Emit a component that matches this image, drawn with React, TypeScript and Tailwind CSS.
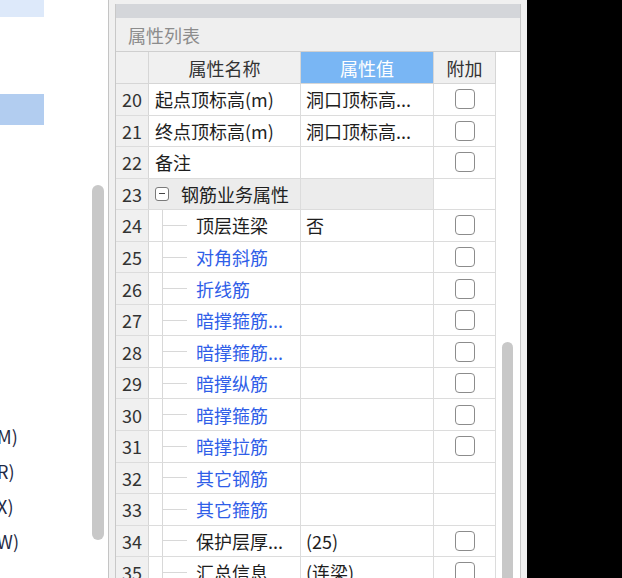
type Row = {
  n: number;
  name: string;
  value?: string;
  kind: "plain" | "group" | "child";
  blue?: boolean;
  check: boolean;
};

const ROWS: Row[] = [
  { n: 20, name: "起点顶标高(m)", value: "洞口顶标高...", kind: "plain", check: true },
  { n: 21, name: "终点顶标高(m)", value: "洞口顶标高...", kind: "plain", check: true },
  { n: 22, name: "备注", kind: "plain", check: true },
  { n: 23, name: "钢筋业务属性", kind: "group", check: false },
  { n: 24, name: "顶层连梁", value: "否", kind: "child", check: true },
  { n: 25, name: "对角斜筋", kind: "child", blue: true, check: true },
  { n: 26, name: "折线筋", kind: "child", blue: true, check: true },
  { n: 27, name: "暗撑箍筋...", kind: "child", blue: true, check: true },
  { n: 28, name: "暗撑箍筋...", kind: "child", blue: true, check: true },
  { n: 29, name: "暗撑纵筋", kind: "child", blue: true, check: true },
  { n: 30, name: "暗撑箍筋", kind: "child", blue: true, check: true },
  { n: 31, name: "暗撑拉筋", kind: "child", blue: true, check: true },
  { n: 32, name: "其它钢筋", kind: "child", blue: true, check: false },
  { n: 33, name: "其它箍筋", kind: "child", blue: true, check: false },
  { n: 34, name: "保护层厚...", value: "(25)", kind: "child", check: true },
  { n: 35, name: "汇总信息", value: "(连梁)", kind: "child", check: true },
];

// left tree is scrolled horizontally, only the tail of each label shows
const LEFT_ITEMS = ["(M)", "(R)", "(X)", "(W)"];

function CheckBox() {
  return <div className="h-[20px] w-[20px] rounded-[4px] border-[1.5px] border-[#8c8c8c] bg-white" />;
}

function NameCell({ row }: { row: Row }) {
  if (row.kind === "group") {
    return (
      <div className="flex h-full items-center bg-[#ececec]">
        <div className="ml-[6px] flex h-[14px] w-[14px] items-center justify-center rounded-[3px] border border-[#7a7a7a] bg-white">
          <div className="h-px w-[6px] bg-[#444]" />
        </div>
        <span className="ml-[12px]">{row.name}</span>
      </div>
    );
  }
  if (row.kind === "child") {
    return (
      <div className="flex h-full items-center">
        <div className="ml-[13px] flex h-full w-[25px] items-center border-l border-[#d8d8d8]">
          <div className="h-px w-full bg-[#d8d8d8]" />
        </div>
        <span className={`ml-[9px] ${row.blue ? "text-[#2f5ee8]" : ""}`}>{row.name}</span>
      </div>
    );
  }
  return (
    <div className="flex h-full items-center pl-[6px]">
      <span>{row.name}</span>
    </div>
  );
}

function PropertyTable() {
  return (
    <div className="flex flex-1 bg-white">
      <div className="flex w-[380px] flex-col">
        {/* header */}
        <div className="flex h-[32px] shrink-0 border-b border-[#d6d6d6]">
          <div className="w-[33px] border-r border-[#d6d6d6] bg-[#f0f0f0]" />
          <div className="flex w-[152px] items-center justify-center border-r border-[#d6d6d6] bg-[#f0f0f0] text-[#333]">
            属性名称
          </div>
          <div className="flex w-[133px] items-center justify-center border-r border-[#d6d6d6] bg-[#79b6f4] text-white">
            属性值
          </div>
          <div className="flex w-[62px] items-center justify-center border-r border-[#d6d6d6] bg-[#f0f0f0] text-[#333]">
            附加
          </div>
        </div>
        {ROWS.map((row) => (
          <div key={row.n} className="flex h-[31.56px] shrink-0 border-b border-[#dcdcdc] text-[#1e1e1e]">
            <div className="flex w-[33px] items-center justify-center border-r border-[#d6d6d6] bg-[#f0f0f0] text-[#333]">
              {row.n}
            </div>
            <div className="w-[152px] border-r border-[#dcdcdc]">
              <NameCell row={row} />
            </div>
            <div
              className={`flex w-[133px] items-center border-r border-[#dcdcdc] pl-[5px] ${
                row.kind === "group" ? "bg-[#ececec]" : ""
              }`}
            >
              {row.value}
            </div>
            <div className="flex w-[62px] items-center justify-center border-r border-[#dcdcdc]">
              {row.check && <CheckBox />}
            </div>
          </div>
        ))}
      </div>
      {/* vertical scrollbar */}
      <div className="flex flex-1 flex-col pl-[6px] pt-[290px]">
        <div className="w-[11px] flex-1 rounded-t-full bg-[#c8c8c8]" />
      </div>
    </div>
  );
}

export default function App() {
  return (
    <div className="flex h-[578px] w-[622px] overflow-hidden bg-black font-['Noto_Sans_CJK_SC',sans-serif] text-[18px] leading-none">
      {/* left tree panel */}
      <div className="flex w-[109px] shrink-0 border-r border-[#c4c4c4] bg-white">
        <div className="flex w-[92px] flex-col overflow-hidden">
          <div className="h-[17px] w-[44px] bg-[#dde9fa]" />
          <div className="h-[77px]" />
          <div className="h-[31px] w-[44px] bg-[#b2cdf0]" />
          <div className="h-[293px]" />
          {LEFT_ITEMS.map((t) => (
            <div key={t} className="flex h-[35px] items-center">
              <span className="-ml-[9px] whitespace-nowrap text-[#1f2a44]">{t}</span>
            </div>
          ))}
        </div>
        <div className="flex w-[12px] flex-col pt-[185px]">
          <div className="h-[355px] rounded-full bg-[#c8c8c8]" />
        </div>
      </div>

      {/* property panel */}
      <div className="flex w-[418px] shrink-0 bg-[#f0f0f0] pl-[6px] pr-[6px] pt-[4px]">
        <div className="flex flex-1 flex-col border-x border-[#c8c8c8]">
          <div className="h-[14px] shrink-0 bg-[#d4d6da]" />
          <div className="flex h-[34px] shrink-0 items-center border-b border-[#cfcfcf] bg-[#efefef] pl-[12px] text-[#8c8c8c]">
            属性列表
          </div>
          <PropertyTable />
        </div>
      </div>

      <div className="flex-1 bg-black" />
    </div>
  );
}
